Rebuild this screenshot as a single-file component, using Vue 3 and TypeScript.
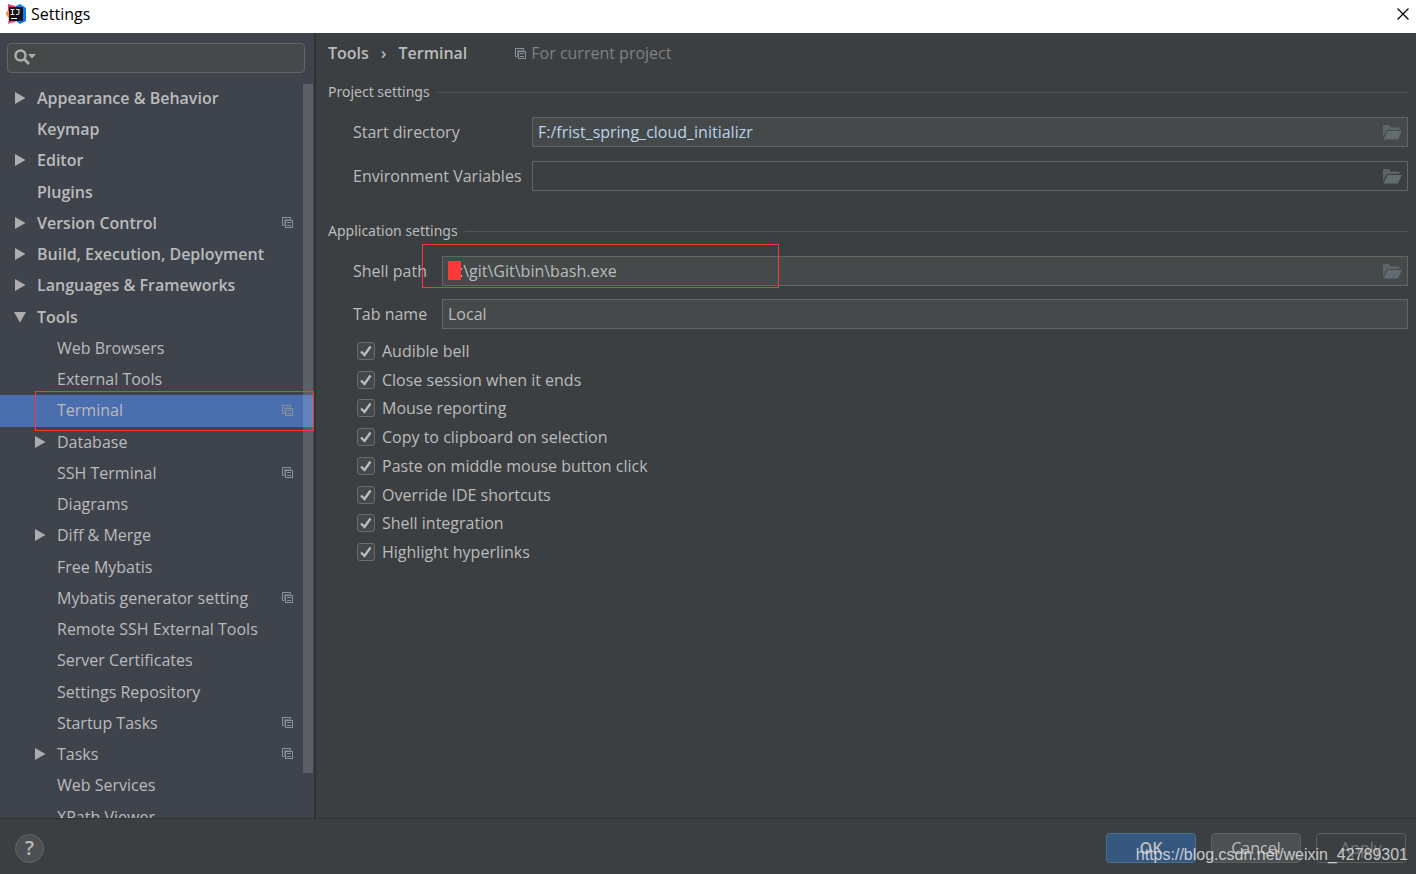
<script setup lang="ts">
import { reactive, ref } from 'vue'

interface TreeItem {
  label: string
  level: 0 | 1
  arrow?: 'closed' | 'open'
  project?: boolean
}

const items: TreeItem[] = [
  { label: 'Appearance & Behavior', level: 0, arrow: 'closed' },
  { label: 'Keymap', level: 0 },
  { label: 'Editor', level: 0, arrow: 'closed' },
  { label: 'Plugins', level: 0 },
  { label: 'Version Control', level: 0, arrow: 'closed', project: true },
  { label: 'Build, Execution, Deployment', level: 0, arrow: 'closed' },
  { label: 'Languages & Frameworks', level: 0, arrow: 'closed' },
  { label: 'Tools', level: 0, arrow: 'open' },
  { label: 'Web Browsers', level: 1 },
  { label: 'External Tools', level: 1 },
  { label: 'Terminal', level: 1, project: true },
  { label: 'Database', level: 1, arrow: 'closed' },
  { label: 'SSH Terminal', level: 1, project: true },
  { label: 'Diagrams', level: 1 },
  { label: 'Diff & Merge', level: 1, arrow: 'closed' },
  { label: 'Free Mybatis', level: 1 },
  { label: 'Mybatis generator setting', level: 1, project: true },
  { label: 'Remote SSH External Tools', level: 1 },
  { label: 'Server Certificates', level: 1 },
  { label: 'Settings Repository', level: 1 },
  { label: 'Startup Tasks', level: 1, project: true },
  { label: 'Tasks', level: 1, arrow: 'closed', project: true },
  { label: 'Web Services', level: 1 },
  { label: 'XPath Viewer', level: 1 },
]

const selected = ref('Terminal')
const query = ref('')
const startDirectory = ref('F:/frist_spring_cloud_initializr')
const environment = ref('')
const shellPath = ref(':\\git\\Git\\bin\\bash.exe')
const tabName = ref('Local')

const options = reactive([
  { label: 'Audible bell', on: true },
  { label: 'Close session when it ends', on: true },
  { label: 'Mouse reporting', on: true },
  { label: 'Copy to clipboard on selection', on: true },
  { label: 'Paste on middle mouse button click', on: true },
  { label: 'Override IDE shortcuts', on: true },
  { label: 'Shell integration', on: true },
  { label: 'Highlight hyperlinks', on: true },
])
</script>

<template>
  <div class="window">
    <svg class="defs" aria-hidden="true">
      <symbol id="copy" viewBox="0 0 11 11">
        <path d="M2.5 8.500H.5V.5h8v2" fill="none" stroke="currentColor" />
        <path d="M2.500 8V2.500H8" fill="none" stroke="currentColor" opacity=".5" />
        <rect x="3.500" y="3.500" width="7" height="7" fill="none" stroke="currentColor" />
        <path d="M5 5.500h4M5 8.500h4" stroke="currentColor" />
      </symbol>
      <symbol id="folder" viewBox="0 0 19 15">
        <path d="M0 0h6l1.500 2.500H16.500V5H4L0 12z" fill="currentColor" opacity=".85" />
        <path d="M4.500 6H19l-4 8.500H.500z" fill="currentColor" />
      </symbol>
    </svg>

    <header class="titlebar">
      <svg class="logo" viewBox="0 0 20 20" aria-hidden="true">
        <path d="M2 0l7 2 3 3-4 12-6 3 1-6-3-4 2-4z" fill="#f0386b" />
        <path d="M0 8l3-1 1 7-2 0z" fill="#fc9a2c" />
        <path d="M10 2l4-2 6 4v13l-6 3-4-3z" fill="#087cfa" />
        <path d="M3 17l6 0 1 1-7 1z" fill="#e0448f" />
        <rect x="3" y="3" width="14" height="14" fill="#151515" />
        <path d="M4.500 5.500h4M6.500 5.500v5M4.500 10.500h4M10 5.500h3v3.500q0 1.500-1.500 1.500h-1.500" fill="none" stroke="#ddd" stroke-width="1.200" />
        <path d="M5 14.500h6" stroke="#fff" />
      </svg>
      <h1>Settings</h1>
      <button class="close" type="button" aria-label="Close">
        <svg viewBox="0 0 12 12" aria-hidden="true"><path d="M.5.5l11 11M11.500.5l-11 11" stroke="#000" stroke-width="1.200" /></svg>
      </button>
    </header>

    <div class="body">
      <aside class="sidebar">
        <label class="search">
          <svg viewBox="0 0 23 16" aria-hidden="true">
            <circle cx="7.500" cy="6.500" r="5" fill="none" stroke="#adadad" stroke-width="2.400" />
            <path d="M11 10l5 5" stroke="#adadad" stroke-width="2.800" />
            <path d="M15 5h8l-4 4.500z" fill="#adadad" />
          </svg>
          <input v-model="query" type="text" aria-label="Search settings" />
        </label>
        <nav class="tree" aria-label="Settings pages">
          <ul>
            <li v-for="item in items" :key="item.label">
              <button
                type="button"
                class="row"
                :class="{ child: item.level === 1, selected: selected === item.label }"
                @click="selected = item.label"
              >
                <span class="arrow">
                  <svg v-if="item.arrow === 'closed'" viewBox="0 0 12 12" aria-hidden="true"><path d="M1 0l10.500 6L1 12z" /></svg>
                  <svg v-if="item.arrow === 'open'" viewBox="0 0 12 12" aria-hidden="true"><path d="M0 1h12L6 11.500z" /></svg>
                </span>
                <span class="name">{{ item.label }}</span>
                <svg v-if="item.project" class="copy" aria-hidden="true"><use href="#copy" /></svg>
              </button>
            </li>
          </ul>
          <div class="thumb"></div>
        </nav>
        <div class="mark mark-row"></div>
      </aside>

      <main class="page">
        <div class="crumbs">
          <h2>Tools <span class="sep">›</span> Terminal</h2>
          <svg class="copy" aria-hidden="true"><use href="#copy" /></svg>
          <span class="scope">For current project</span>
        </div>

        <section class="project">
          <h3>Project settings</h3>
          <div class="fields wide">
            <label for="start">Start directory</label>
            <div class="field">
              <input id="start" v-model="startDirectory" class="changed" type="text" />
              <button type="button" aria-label="Browse start directory"><svg aria-hidden="true"><use href="#folder" /></svg></button>
            </div>
            <label for="env">Environment Variables</label>
            <div class="field plain">
              <input id="env" v-model="environment" type="text" />
              <button type="button" aria-label="Edit environment variables"><svg aria-hidden="true"><use href="#folder" /></svg></button>
            </div>
          </div>
        </section>

        <section>
          <h3>Application settings</h3>
          <div class="fields">
            <label for="shell">Shell path</label>
            <div class="field">
              <input id="shell" v-model="shellPath" class="masked" type="text" />
              <button type="button" aria-label="Browse shell path"><svg aria-hidden="true"><use href="#folder" /></svg></button>
              <div class="mask"></div>
              <div class="mark mark-path"></div>
            </div>
            <label for="tab">Tab name</label>
            <div class="field">
              <input id="tab" v-model="tabName" type="text" />
            </div>
          </div>
          <ul class="options">
            <li v-for="option in options" :key="option.label">
              <label>
                <span class="box">
                  <input v-model="option.on" type="checkbox" />
                  <svg viewBox="0 0 18 18" aria-hidden="true"><path d="M4 9.500l3.500 3.500L13.500 4.500" /></svg>
                </span>
                {{ option.label }}
              </label>
            </li>
          </ul>
        </section>
      </main>
    </div>

    <footer class="footer">
      <button class="help" type="button" aria-label="Help">?</button>
      <div class="actions">
        <button class="ok" type="button">OK</button>
        <button type="button">Cancel</button>
        <button type="button" disabled>Apply</button>
      </div>
      <span class="watermark">https://blog.csdn.net/weixin_42789301</span>
    </footer>
  </div>
</template>

<style>
body {
  margin: 0;
  background: #3c3f41;
}
</style>

<style scoped>
.window {
  display: flex;
  flex-direction: column;
  height: 100vh;
  overflow: hidden;
  background: #3c3f41;
  color: #bbbbbb;
  font: 16px/20px "Open Sans", "Noto Sans", sans-serif;
}
* {
  box-sizing: border-box;
}
button,
input {
  font: inherit;
  color: inherit;
  margin: 0;
  padding: 0;
  border: 0;
  background: none;
  outline: none;
}
h1,
h2,
h3,
ul {
  margin: 0;
  padding: 0;
  list-style: none;
}
svg {
  display: block;
}
.defs {
  position: absolute;
  width: 0;
  height: 0;
}
.titlebar {
  flex: none;
  display: flex;
  align-items: center;
  gap: 5px;
  height: 33px;
  padding: 0 7px 5px 6px;
  background: #fff;
  color: #000;
}
.logo {
  width: 20px;
  height: 20px;
}
h1 {
  flex: 1;
  font-size: 16px;
  font-weight: 400;
}
.close svg {
  width: 12px;
  height: 12px;
}
.body {
  flex: 1;
  display: flex;
  min-height: 0;
}
.sidebar {
  position: relative;
  flex: none;
  display: flex;
  flex-direction: column;
  width: 316px;
  background: #3f434c;
  border-right: 2px solid #323232;
}
.search {
  flex: none;
  display: flex;
  align-items: center;
  height: 30px;
  margin: 10px 9px 10px 7px;
  padding: 0 5px 2px;
  border: 1px solid #646464;
  border-radius: 4px;
  background: #45494a;
}
.search svg {
  width: 23px;
  height: 16px;
}
.search input {
  flex: 1;
  min-width: 0;
}
.tree {
  position: relative;
  flex: 1;
  min-height: 0;
  overflow: hidden;
}
.tree li {
  height: 31px;
}
.tree li:nth-child(4n + 3) {
  height: 32px;
}
.row {
  display: flex;
  align-items: center;
  width: 100%;
  height: 100%;
  padding: 0 21px 2px 14px;
  text-align: left;
  font-weight: 600;
  white-space: nowrap;
}
.row.child {
  padding-left: 34px;
  font-weight: 400;
}
.row.selected {
  background: #4b6eaf;
}
.arrow {
  width: 23px;
}
.arrow svg {
  width: 12px;
  height: 12px;
  fill: #adadad;
}
.name {
  flex: 1;
}
.copy {
  width: 11px;
  height: 11px;
  color: #87939a;
}
.thumb {
  position: absolute;
  top: 1px;
  right: 1px;
  bottom: 45px;
  width: 10px;
  background: rgba(255, 255, 255, 0.15);
}
.mark {
  position: absolute;
  border: 1px solid #fb3838;
  pointer-events: none;
}
.mark-row {
  top: 358px;
  left: 35px;
  right: 0;
  height: 40px;
}
.page {
  flex: 1;
  min-width: 0;
  padding: 10px 8px 0 12px;
}
.crumbs {
  display: flex;
  align-items: center;
  height: 20px;
}
h2 {
  font-size: 16px;
  font-weight: 600;
  margin-right: 48px;
}
.sep {
  margin: 0 8px;
}
.scope {
  margin-left: 5px;
  color: #808080;
}
h3 {
  display: flex;
  align-items: center;
  gap: 7px;
  height: 20px;
  font-family: "Noto Sans", "Open Sans", sans-serif;
  font-size: 14px;
  font-weight: 400;
}
h3::after {
  content: "";
  flex: 1;
  height: 1px;
  background: #555555;
}
section {
  margin-top: 30px;
}
.project {
  margin-top: 19px;
}
.fields {
  display: grid;
  grid-template-columns: 89px 1fr;
  row-gap: 13px;
  align-items: center;
  margin-top: 15px;
  padding-left: 25px;
}
.fields.wide {
  grid-template-columns: 179px 1fr;
  row-gap: 14px;
}
.field {
  position: relative;
  display: flex;
  align-items: center;
  height: 30px;
  border: 1px solid #646464;
  background: #45494a;
}
.field.plain {
  background: none;
}
.field input {
  flex: 1;
  min-width: 0;
  height: 28px;
  padding: 0 5px;
}
.field .changed {
  color: #bcd2e8;
}
.field .masked {
  padding-left: 16px;
}
.field button svg {
  width: 19px;
  height: 15px;
  margin-right: 5px;
  color: #626b6f;
}
.mask {
  position: absolute;
  top: 4px;
  left: 5px;
  width: 13px;
  height: 19px;
  background: #fb3838;
}
.mark-path {
  top: -13px;
  left: -21px;
  width: 357px;
  height: 44px;
}
.options {
  margin-top: 7px;
  padding-left: 29px;
}
.options li {
  height: 29px;
}
.options li:nth-child(4n + 2) {
  height: 28px;
}
.options label {
  display: inline-flex;
  align-items: center;
  gap: 7px;
  height: 29px;
}
.box {
  position: relative;
  width: 18px;
  height: 18px;
}
.box input {
  display: block;
  appearance: none;
  width: 18px;
  height: 18px;
  border: 1px solid #6b6b6b;
  border-radius: 3px;
  background: #43494a;
}
.box svg {
  position: absolute;
  inset: 0;
  fill: none;
  stroke: #bbbbbb;
  stroke-width: 2.400;
  opacity: 0;
  pointer-events: none;
}
.box input:checked + svg {
  opacity: 1;
}
.footer {
  position: relative;
  flex: none;
  display: flex;
  align-items: center;
  justify-content: space-between;
  height: 56px;
  padding: 3px 10px 0 15px;
  border-top: 1px solid #323232;
}
.help {
  width: 29px;
  height: 29px;
  border: 1px solid #646464;
  border-radius: 50%;
  background: #4c5052;
  font-size: 20px;
  font-weight: 600;
}
.actions {
  display: flex;
  gap: 15px;
}
.actions button {
  width: 90px;
  height: 30px;
  border: 1px solid #5e6060;
  border-radius: 4px;
  background: #4c5052;
}
.actions .ok {
  border-color: #4c708c;
  background: #365880;
  font-weight: 600;
}
.actions button:disabled {
  background: none;
  color: #777777;
}
.watermark {
  position: absolute;
  right: 8px;
  bottom: 9px;
  color: rgba(225, 225, 225, 0.85);
  font: 16px/20px "Liberation Sans", Arial, sans-serif;
  pointer-events: none;
}
</style>
